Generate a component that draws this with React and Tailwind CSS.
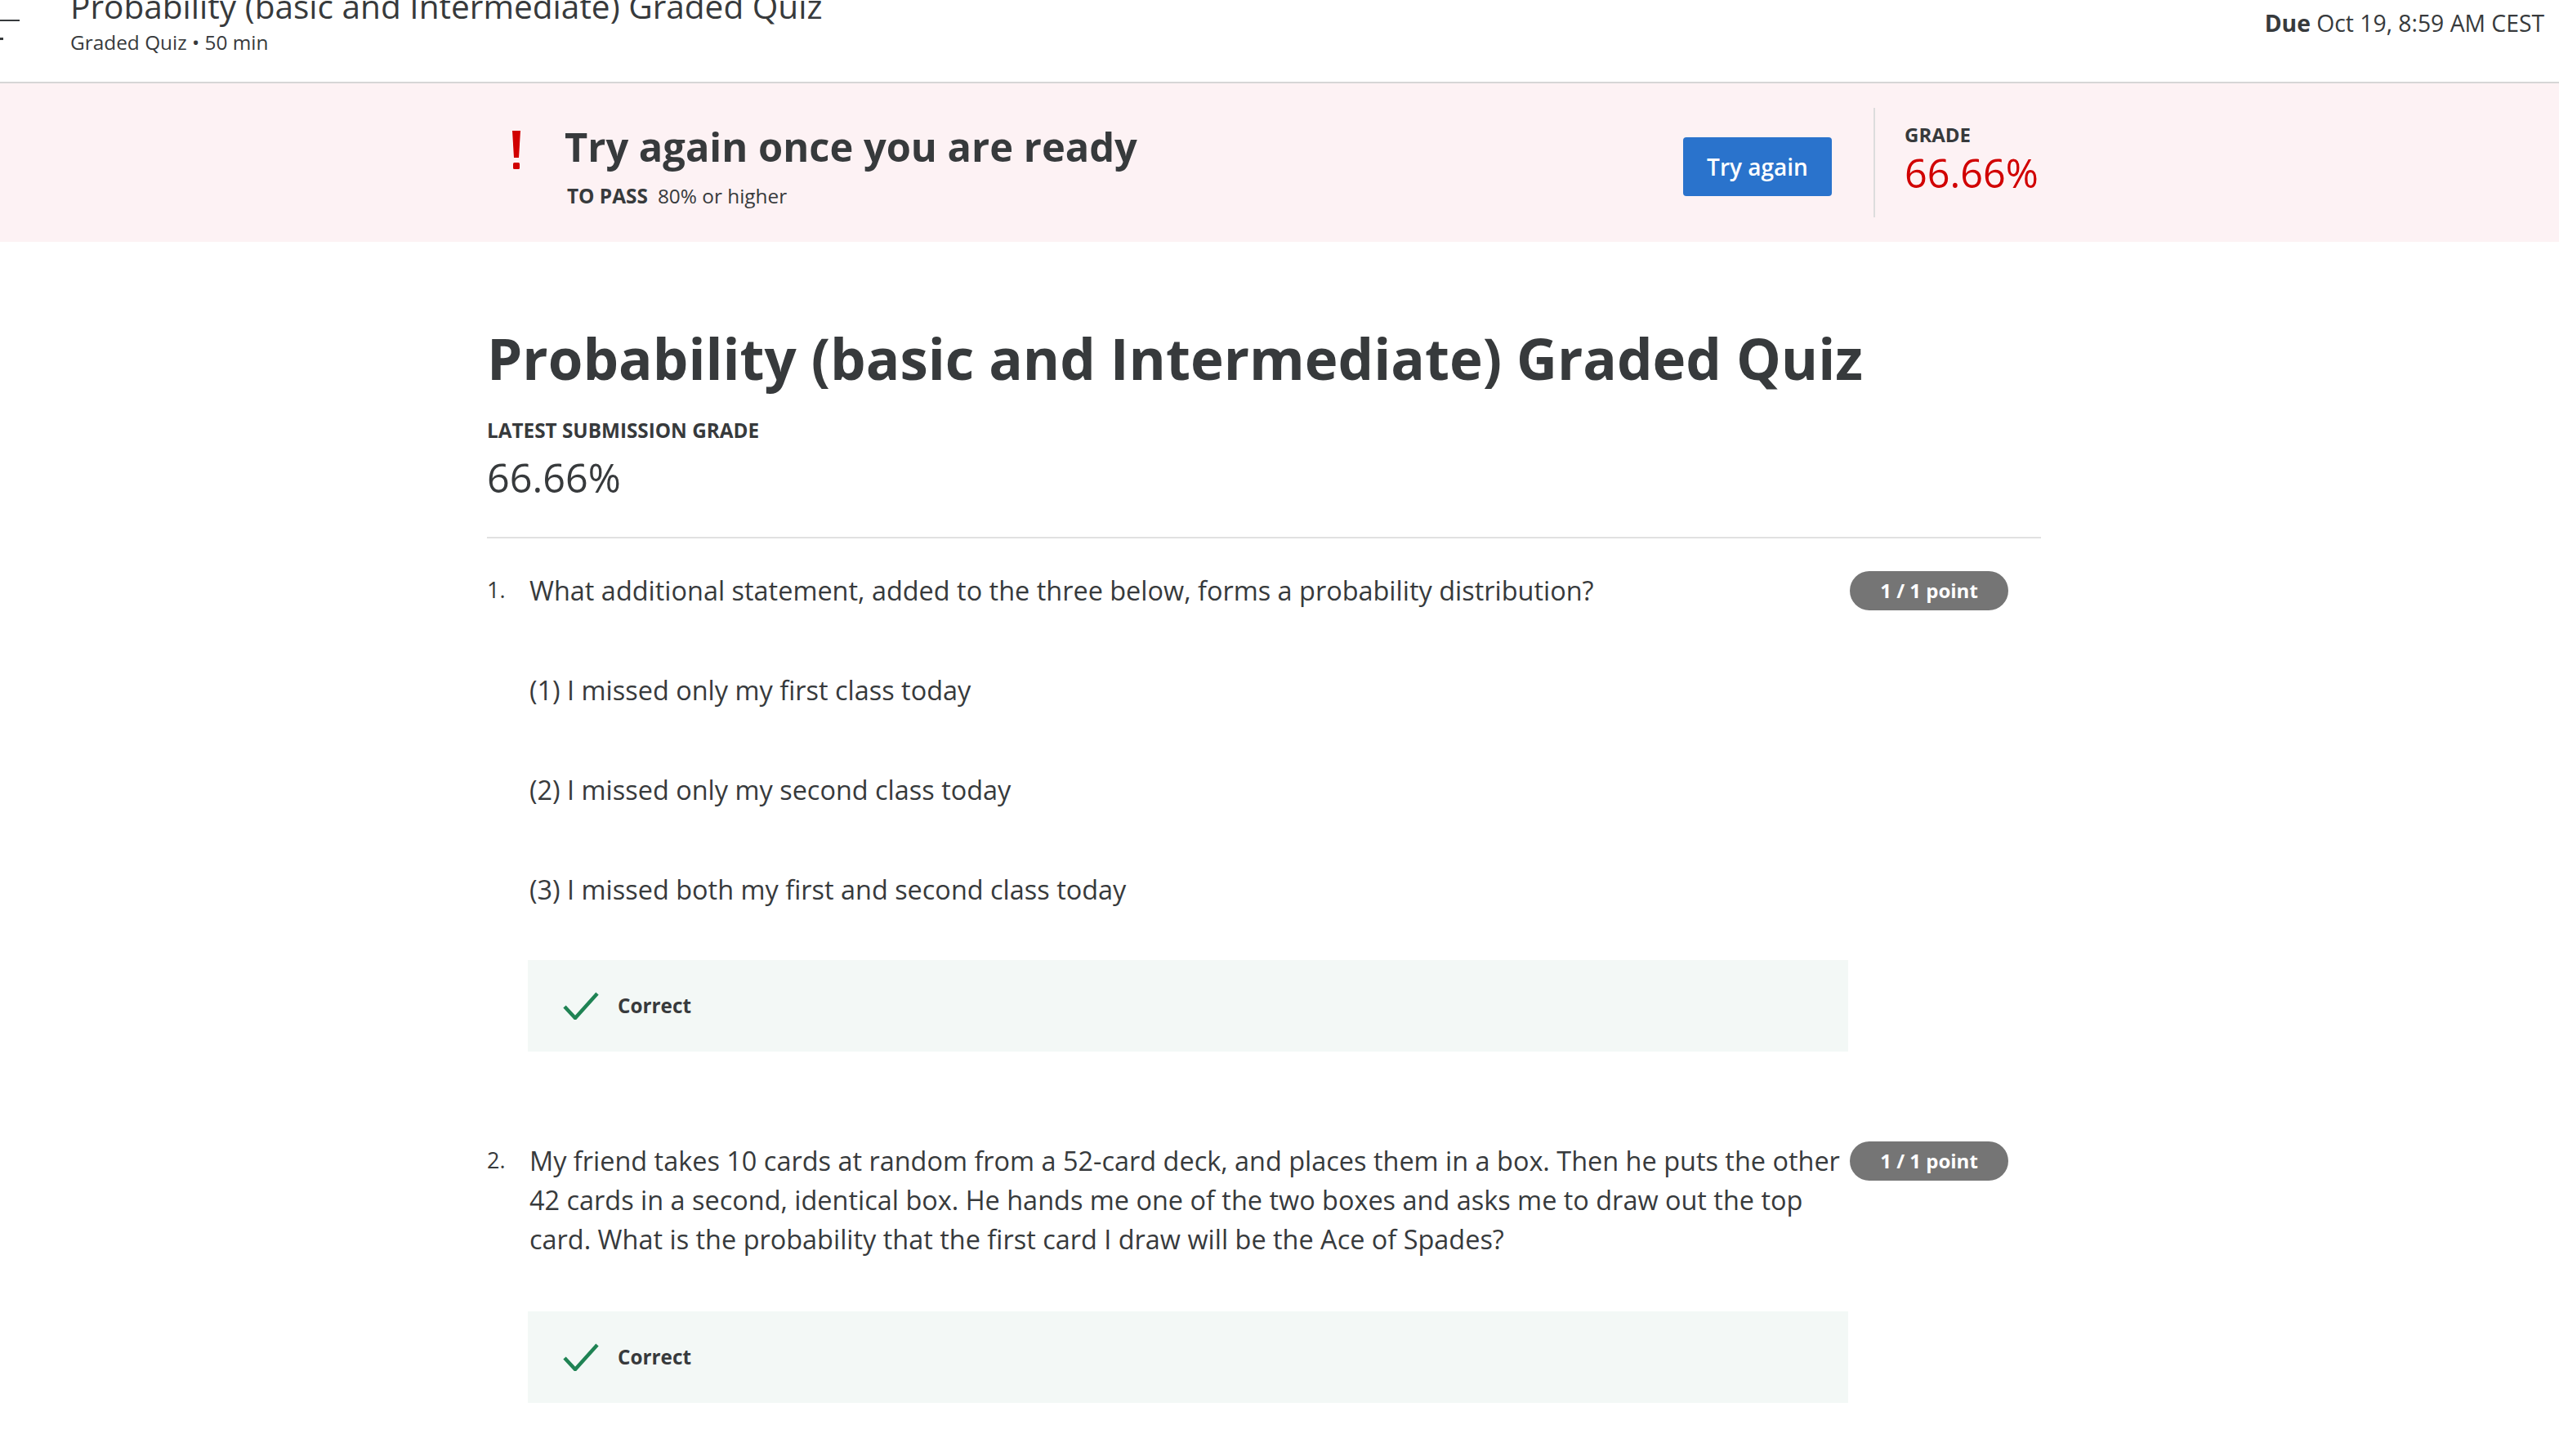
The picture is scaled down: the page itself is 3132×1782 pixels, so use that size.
import React from "react";

function Check() {
  return (
    <svg width="44" height="34" viewBox="0 0 44 34" className="shrink-0">
      <polyline points="2,18 15,32 42,2" fill="none" stroke="#1f8354" strokeWidth="4.5" strokeLinecap="butt" strokeLinejoin="miter" />
    </svg>
  );
}

function Badge() {
  return (
    <div className="shrink-0 w-[194px] h-[48px] rounded-full bg-[#757575] text-white font-bold text-[24px] leading-[48px] flex items-center justify-center">
      1 / 1 point
    </div>
  );
}

function CorrectBox() {
  return (
    <div className="ml-[50px] w-[1616px] h-[112px] bg-[#f3f8f6] flex items-center pl-[43px] gap-[23px]">
      <Check />
      <span className="font-bold text-[24.3px] text-[#373a3c]">Correct</span>
    </div>
  );
}

export default function App() {
  return (
    <div className="w-full min-h-screen bg-white font-['Open_Sans',sans-serif] text-[#373a3c]">
      {/* Header */}
      <header className="h-[102px] border-b-2 border-[#d6d6d6] flex justify-between">
        <div className="flex">
          <div className="w-[86px] relative">
            <svg width="30" height="60" viewBox="0 0 30 60" className="absolute left-0 top-0">
              <rect x="0" y="24" width="24" height="2" fill="#373a3c" />
              <rect x="0" y="46" width="4" height="3" fill="#373a3c" />
            </svg>
          </div>
          <div className="flex flex-col">
            <div className="mt-[-12px] text-[40.6px] leading-[40px] text-[#373a3c]">
              Probability (basic and Intermediate) Graded Quiz
            </div>
            <div className="mt-[8px] text-[24.4px] leading-[32px] text-[#373a3c]">
              Graded Quiz • 50 min
            </div>
          </div>
        </div>
        <div className="pt-[10px] pr-[18px] text-[28.3px] leading-[36px]">
          <span className="font-bold">Due</span> Oct 19, 8:59 AM CEST
        </div>
      </header>

      {/* Banner */}
      <div className="h-[194px] bg-[#fdf2f4]">
        <div className="ml-[596px] w-[1902px] flex items-start">
          <svg width="14" height="48" viewBox="0 0 14 48" className="ml-[29px] mt-[58px] shrink-0">
            <polygon points="2,0 12,0 10,33 4,33" fill="#d10000" />
            <rect x="3" y="39" width="8" height="8" rx="1.5" fill="#d10000" />
          </svg>
          <div className="ml-[52px] mt-[47px] flex flex-col">
            <div className="text-[48.8px] leading-[60px] font-bold">Try again once you are ready</div>
            <div className="mt-[15px] ml-[3px] text-[24.4px] leading-[32px]">
              <span className="font-bold">TO PASS</span>
              <span className="ml-[12px]">80% or higher</span>
            </div>
          </div>
          <div className="ml-auto flex items-start">
            <button className="mt-[66px] w-[182px] h-[72px] bg-[#2a73cc] rounded-[4px] text-white text-[28px] font-semibold">
              Try again
            </button>
            <div className="ml-[51px] mt-[30px] w-[2px] h-[134px] bg-[#dddddd]" />
            <div className="ml-[36px] mt-[47px] w-[167px] flex flex-col">
              <div className="text-[24px] leading-[32px] font-bold">GRADE</div>
              <div className="mt-[2px] text-[48.5px] leading-[56px] text-[#d10000]">66.66%</div>
            </div>
          </div>
        </div>
      </div>

      {/* Main */}
      <main className="ml-[596px] w-[1902px] pt-[98px] pb-[80px]">
        <h1 className="text-[69px] leading-[88px] font-bold">
          Probability (basic and Intermediate) Graded Quiz
        </h1>
        <div className="mt-[29px] text-[24.3px] leading-[32px] font-bold">LATEST SUBMISSION GRADE</div>
        <div className="mt-[13px] text-[48.5px] leading-[56px]">66.66%</div>
        <div className="mt-[45px] h-[2px] bg-[#e1e1e1]" />

        {/* Q1 */}
        <div className="mt-[40px]">
          <div className="flex items-start">
            <div className="w-[52px] shrink-0 text-[27px] leading-[46px]">1.</div>
            <div className="w-[1616px] text-[32.45px] leading-[48px]">
              What additional statement, added to the three below, forms a probability distribution?
            </div>
            <Badge />
          </div>
          <div className="pl-[52px] flex flex-col gap-[74px] mt-[74px] text-[32.45px] leading-[48px]">
            <div>(1) I missed only my first class today</div>
            <div>(2) I missed only my second class today</div>
            <div>(3) I missed both my first and second class today</div>
          </div>
          <div className="mt-[62px]">
            <CorrectBox />
          </div>
        </div>

        {/* Q2 */}
        <div className="mt-[110px]">
          <div className="flex items-start">
            <div className="w-[52px] shrink-0 text-[27px] leading-[46px]">2.</div>
            <div className="w-[1616px] text-[32.45px] leading-[48px]">
              My friend takes 10 cards at random from a 52-card deck, and places them in a box. Then he puts the other 42 cards in a second, identical box. He hands me one of the two boxes and asks me to draw out the top card. What is the probability that the first card I draw will be the Ace of Spades?
            </div>
            <Badge />
          </div>
          <div className="mt-[64px]">
            <CorrectBox />
          </div>
        </div>
      </main>
    </div>
  );
}
